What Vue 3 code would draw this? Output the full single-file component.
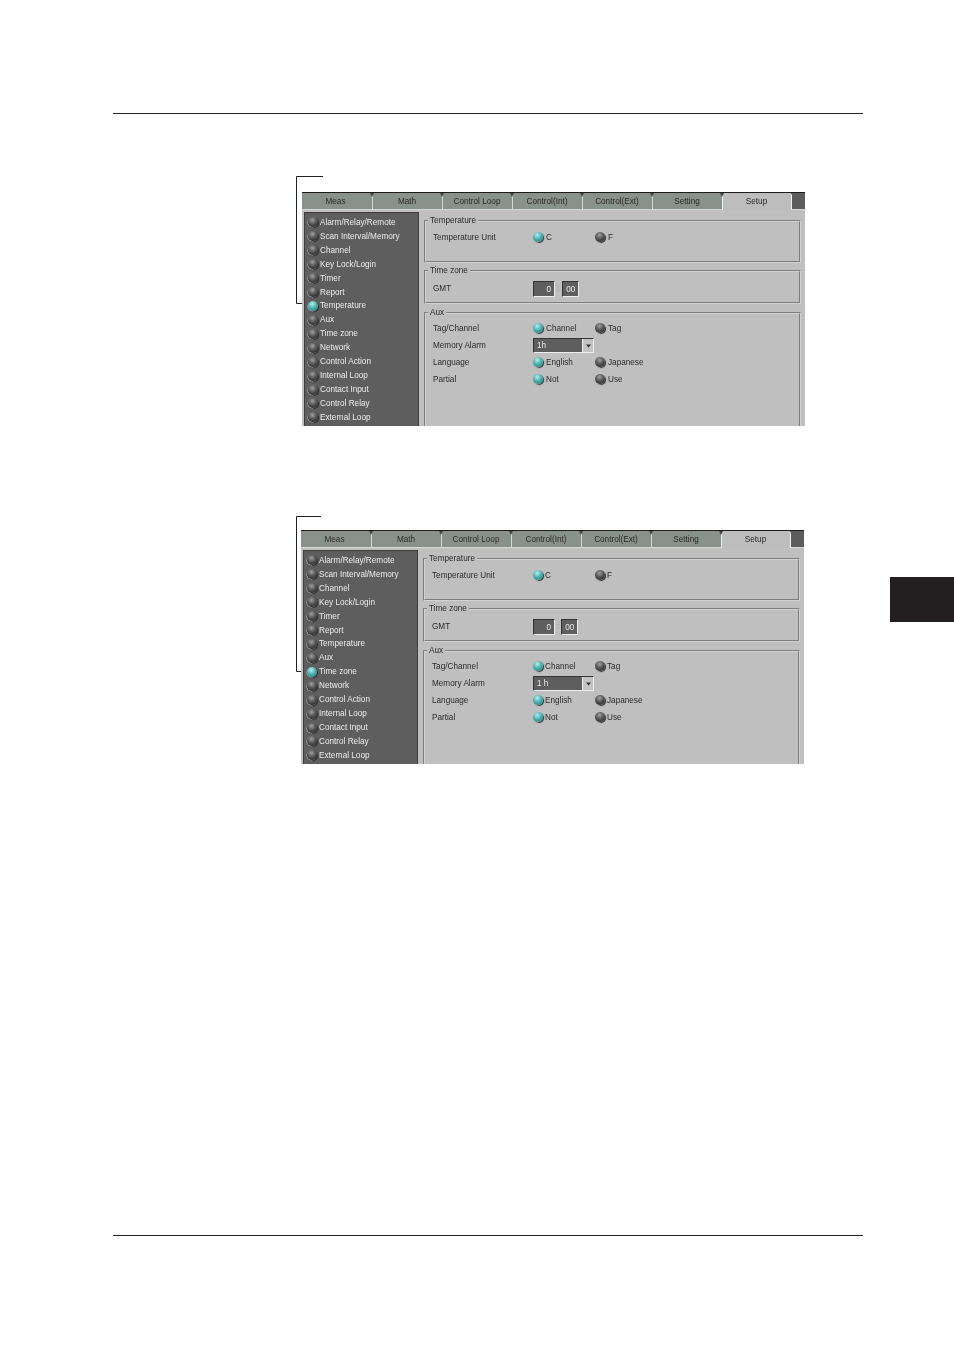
<template>
  <div class="page">
    <div class="rule top-rule"></div>

    <section
      v-for="screen in screens"
      :key="screen.id"
      class="screen"
      :class="screen.id"
    >
      <!-- leader line from the callout to the selected menu item -->
      <svg class="leader" width="40" :height="screen.leaderH + 2">
        <polyline
          :points="`${screen.leaderW},0.5 0.5,0.5 0.5,${screen.leaderH + 0.5} ${screen.leaderEnd},${screen.leaderH + 0.5}`"
          fill="none"
          stroke="#222"
          stroke-width="1"
        />
      </svg>

      <div class="tabs">
        <div
          v-for="tab in tabs"
          :key="tab"
          class="tab"
          :class="{ active: tab === 'Setup' }"
        >{{ tab }}</div>
        <div class="tab-rest"></div>
      </div>

      <div class="body">
        <ul class="menu">
          <li v-for="item in menu" :key="item">
            <span class="led" :class="{ on: item === screen.selected }"></span>
            <span>{{ item }}</span>
          </li>
        </ul>

        <div class="panel">
          <fieldset class="group temperature">
            <legend>Temperature</legend>
            <div class="row">
              <span class="label">Temperature Unit</span>
              <span class="opt"><span class="led on"></span>C</span>
              <span class="opt"><span class="led"></span>F</span>
            </div>
          </fieldset>

          <fieldset class="group timezone">
            <legend>Time zone</legend>
            <div class="row">
              <span class="label">GMT</span>
              <span class="gmt">
                <span class="field hour">0</span>
                <span class="colon">:</span>
                <span class="field minute">{{ screen.minute }}</span>
              </span>
            </div>
          </fieldset>

          <fieldset class="group aux">
            <legend>Aux</legend>
            <div class="row">
              <span class="label">Tag/Channel</span>
              <span class="opt"><span class="led on"></span>Channel</span>
              <span class="opt"><span class="led"></span>Tag</span>
            </div>
            <div class="row">
              <span class="label">Memory Alarm</span>
              <span class="select">
                <span class="select-value">{{ screen.memory }}</span>
                <span class="select-btn">
                  <svg width="5" height="4" viewBox="0 0 5 4"><path d="M0 0.5h5L2.5 3.5z" fill="#333" /></svg>
                </span>
              </span>
            </div>
            <div class="row">
              <span class="label">Language</span>
              <span class="opt"><span class="led on"></span>English</span>
              <span class="opt"><span class="led"></span>Japanese</span>
            </div>
            <div class="row">
              <span class="label">Partial</span>
              <span class="opt"><span class="led on"></span>Not</span>
              <span class="opt"><span class="led"></span>Use</span>
            </div>
          </fieldset>
        </div>
      </div>
    </section>

    <div class="rule bottom-rule"></div>
    <div class="chapter-tab"></div>
  </div>
</template>

<script setup>
const tabs = ['Meas', 'Math', 'Control Loop', 'Control(Int)', 'Control(Ext)', 'Setting', 'Setup']

const menu = [
  'Alarm/Relay/Remote',
  'Scan Interval/Memory',
  'Channel',
  'Key Lock/Login',
  'Timer',
  'Report',
  'Temperature',
  'Aux',
  'Time zone',
  'Network',
  'Control Action',
  'Internal Loop',
  'Contact Input',
  'Control Relay',
  'External Loop'
]

const screens = [
  { id: 'first', selected: 'Temperature', minute: '00', memory: '1h', leaderW: 27, leaderH: 127, leaderEnd: 13 },
  { id: 'second', selected: 'Time zone', minute: '00', memory: '1 h', leaderW: 25, leaderH: 155, leaderEnd: 12 }
]
</script>

<style>
html,
body {
  margin: 0;
  background: #fff;
}
</style>

<style scoped>
.page {
  position: relative;
  width: 954px;
  height: 1350px;
  padding-top: 113px;
  box-sizing: border-box;
  font-family: "Liberation Sans", Arial, sans-serif;
  background: #fff;
  overflow: hidden;
}

.rule {
  width: 750px;
  height: 1px;
  margin-left: 113px;
  background: #222;
}

.bottom-rule {
  margin-top: 471px;
}

.chapter-tab {
  position: absolute;
  left: 890px;
  top: 577px;
  width: 64px;
  height: 45px;
  background: #231f20;
}

.screen {
  position: relative;
  width: 503px;
  height: 234px;
  margin-left: 302px;
  font-size: 8.2px;
  line-height: 10px;
  color: #2b2b2b;
}

.first {
  margin-top: 78px;
}

.second {
  margin-top: 104px;
  margin-left: 301px;
}

.leader {
  position: absolute;
  left: -6px;
  top: -16px;
  overflow: visible;
}

.second .leader {
  left: -5px;
  top: -14px;
}

/* the screenshots are scanned from print, so everything is a little soft */
.tabs,
.body {
  filter: blur(0.3px);
}

.tabs {
  display: flex;
  height: 18px;
  background: #5c5c5c;
  border-top: 1px solid #1c1c1c;
  box-sizing: border-box;
}

.tab {
  position: relative;
  width: 70px;
  padding-right: 1px;
  text-align: center;
  line-height: 18px;
  background: #88918b;
  border-left: 1px solid #d4d8d5;
  box-shadow: inset 0 -1px 0 #d4d8d5;
  box-sizing: border-box;
}

.tab:first-child {
  padding-right: 3px;
  border-left: none;
}

/* little dark notch where two tabs meet */
.tab:not(:first-child)::before {
  content: "";
  position: absolute;
  left: -3px;
  top: 0;
  border-left: 2.5px solid transparent;
  border-right: 2.5px solid transparent;
  border-top: 4px solid #444;
}

.tab.active {
  background: #bdbdbd;
  border-left: 1px solid #efefef;
  border-right: 1px solid #efefef;
  border-top-right-radius: 3px;
  box-shadow: none;
}

.tab-rest {
  flex: 1;
  background: #5c5c5c;
  box-shadow: inset 0 -1px 0 #d4d8d5;
}

.body {
  display: flex;
  height: 216px;
  padding: 2px 0 0 2px;
  box-sizing: border-box;
  background: #bfbfbf;
  gap: 5px;
}

.menu {
  width: 115px;
  flex: none;
  margin: 0;
  padding: 3px 0 0 3px;
  box-sizing: border-box;
  list-style: none;
  background: #5e5e5e;
  border: 1px solid #3d3d3d;
  border-bottom: none;
  color: #ececec;
}

.menu li {
  display: flex;
  align-items: center;
  gap: 2px;
  height: 13.93px;
  white-space: nowrap;
}

.led {
  display: inline-block;
  flex: none;
  width: 10px;
  height: 10px;
  margin-bottom: 1px;
  border-radius: 50%;
  background: radial-gradient(circle at 45% 30%, #a0a0a0 0%, #5a5a5a 42%, #222 92%);
  box-shadow: -0.5px 0.5px 0 #bdbdbd, 1px 1px 1px #2a2a2a;
}

.led.on {
  background: radial-gradient(circle at 42% 30%, #b8ecec 0%, #45abab 50%, #1f7f80 100%);
}

.panel {
  flex: 1;
  display: flex;
  flex-direction: column;
  padding: 4px 4px 0 0;
  min-width: 0;
  overflow: hidden;
}

.group {
  flex: none;
  margin: 0;
  padding: 0 0 0 7px;
  min-width: 0;
  border: 2px groove #d2d2d2;
  box-sizing: border-box;
}

.group legend {
  margin-left: -5px;
  padding: 0 2px;
  font-size: 8.2px;
  line-height: 10px;
}

.temperature {
  height: 47px;
}

.timezone {
  height: 38px;
  margin-top: 3px;
}

.aux {
  height: 130px;
  margin-top: 4px;
}

.temperature .row {
  margin-top: 3px;
}

.timezone .row {
  margin-top: 4px;
}

.aux .row:first-of-type {
  margin-top: 2px;
}

.row {
  display: flex;
  align-items: center;
  height: 17px;
}

.label {
  width: 100px;
  flex: none;
}

.second .label {
  width: 101px;
}

.opt {
  display: flex;
  align-items: center;
  gap: 3px;
  width: 62px;
  flex: none;
  white-space: nowrap;
}

.second .opt {
  gap: 2px;
}

.gmt {
  display: flex;
  align-items: center;
  gap: 2px;
}

.field {
  height: 16px;
  line-height: 15px;
  box-sizing: border-box;
  background: #5e5e5e;
  color: #ececec;
  border-top: 1px solid #333;
  border-left: 1px solid #333;
  border-right: 1px solid #eee;
  border-bottom: 1px solid #eee;
}

.hour {
  width: 22px;
  padding-right: 3px;
  text-align: right;
}

.minute {
  width: 17px;
  text-align: center;
}

.first .minute {
  margin-left: 1px;
}

.colon {
  color: #9a9a9a;
}

.select {
  display: flex;
  width: 61px;
  height: 15px;
  box-sizing: border-box;
  background: #5e5e5e;
  color: #ececec;
  border-top: 1px solid #333;
  border-left: 1px solid #333;
  border-right: 1px solid #eee;
  border-bottom: 1px solid #eee;
}

.select-value {
  flex: 1;
  padding-left: 3px;
  line-height: 14px;
}

.select-btn {
  display: flex;
  align-items: center;
  justify-content: center;
  width: 11px;
  background: #c4c4c4;
  border-left: 1px solid #eee;
  box-sizing: border-box;
}
</style>
